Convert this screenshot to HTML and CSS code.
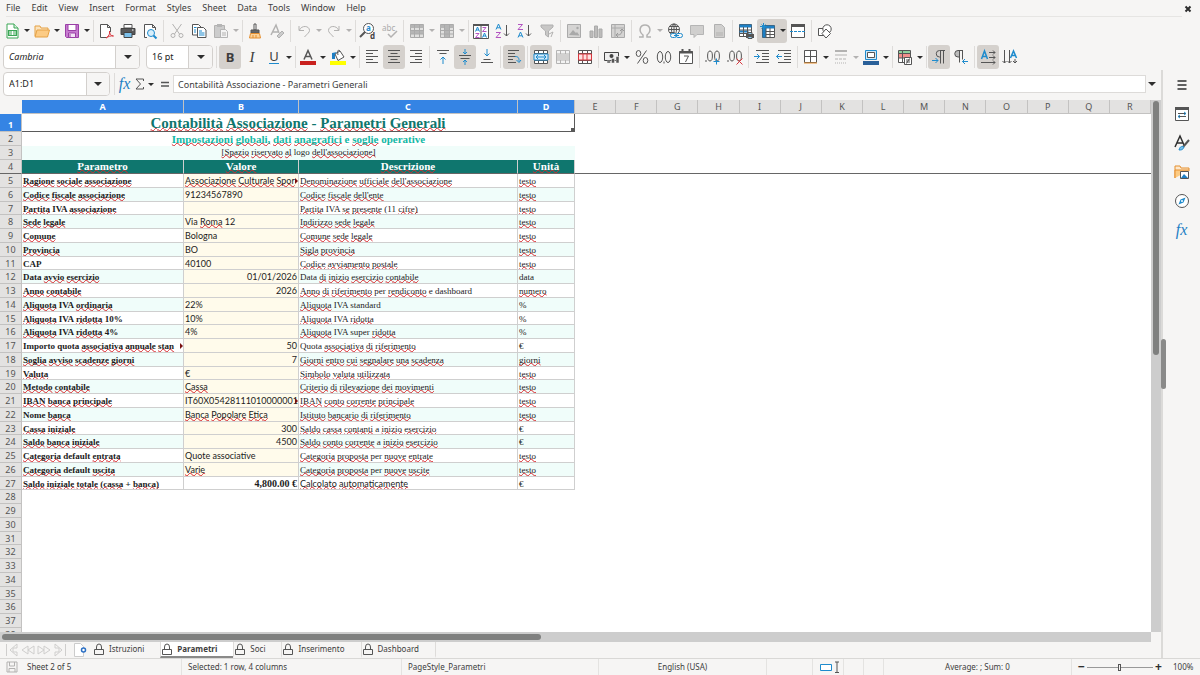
FILE: index.html
```html
<!DOCTYPE html>
<html lang="en">
<head>
<meta charset="utf-8">
<title>Contabilità Associazione</title>
<link rel="stylesheet" href="styles.css">
</head>
<body>
<header class="menubar">
  <nav class="menus" aria-label="Main menu">
    <button>File</button><button>Edit</button><button>View</button><button>Insert</button><button>Format</button><button>Styles</button><button>Sheet</button><button>Data</button><button>Tools</button><button>Window</button><button>Help</button>
  </nav>
  <button class="close" aria-label="Close document"><svg viewBox="0 0 8 8"><path d="M1.5 1.5l5 5m0-5l-5 5" class="k w2"/></svg></button>
</header>

<div class="toolbar standard" role="toolbar" aria-label="Standard">
  <button class="tb" aria-label="New"><svg viewBox="0 0 16 16"><path d="M3 1h7l4 4v10H3z" fill="#fff" stroke="#3aa655"/><path d="M10 1v4h4" fill="#d6f0dc" stroke="#3aa655"/><path d="M4 7h9v6H4z" fill="#3aa655"/><path d="M5 9h7M5 11h7M8.500 8v4" stroke="#fff"/></svg></button><button class="drop" aria-label="New menu"></button>
  <button class="tb" aria-label="Open"><svg viewBox="0 0 16 16"><path d="M1 13V3h5l1 2h7v3" fill="#fbe3bd" stroke="#e5a145"/><path d="M1 14l2-7h12.500l-2 7z" fill="#fccb84" stroke="#e5a145"/></svg></button><button class="drop" aria-label="Recent files"></button>
  <button class="tb" aria-label="Save"><svg viewBox="0 0 16 16"><path d="M1.500 1.500h13v13h-12l-1-1z" fill="#c77bd0" stroke="#9a3fa6"/><path d="M4 1.500h8v6H4z" fill="#fff" stroke="#9a3fa6"/><path d="M4.500 10h7v4.500h-7z" fill="#f3e3f5" stroke="#9a3fa6"/><path d="M6 11v3" stroke="#9a3fa6"/></svg></button><button class="drop" aria-label="Save menu"></button>
  <i class="sep"></i>
  <button class="tb" aria-label="Export as PDF"><svg viewBox="0 0 16 16"><path d="M9 14.500H2.500v-13h7l3 3V9M9.500 1.500v3h3" class="p"/><path d="M8 15c3-2 4-4 3.500-7 0 3 1.500 5 4 5-3-.500-5 .500-7.500 2z" fill="none" stroke="#d9363e"/></svg></button>
  <button class="tb" aria-label="Print"><svg viewBox="0 0 16 16"><path d="M4 1.500h8V5H4z" class="p"/><path d="M1 5.500h14v6H1z" fill="#59595a" stroke="#444"/><path d="M4 9.500h8v5H4z" fill="#7cc0ea" stroke="#444"/><path d="M12 7h1.500" stroke="#fff"/></svg></button>
  <button class="tb" aria-label="Print preview"><svg viewBox="0 0 16 16"><path d="M5 14.500H2.500v-13h8l3 3V7M10.500 1.500v3h3" class="p"/><circle cx="9" cy="10" r="3.500" fill="#d9effb" class="b"/><path d="M11.500 12.500l3 3" class="b w2"/></svg></button>
  <i class="sep"></i>
  <button class="tb" aria-label="Cut"><svg viewBox="0 0 16 16"><path d="M3.500 1l7 10M12.500 1l-7 10" class="d"/><circle cx="4" cy="12.500" r="2" class="d"/><circle cx="12" cy="12.500" r="2" class="d"/></svg></button>
  <button class="tb" aria-label="Copy"><svg viewBox="0 0 16 16"><path d="M1.500 1.500h6l2.500 2.500v8H1.500z" class="p"/><path d="M6.500 4.500h6l2.500 2.500v7.500H6.500z" class="p"/><path d="M3 4.500h2.500M3 7h2M3 9h2M8 8h3M8 10h5.500M8 12h5.500" class="b"/></svg></button>
  <button class="tb" aria-label="Paste"><svg viewBox="0 0 16 16"><path d="M1.500 2.500h10v12h-10z" fill="#ccc" class="dd"/><path d="M4 1h5v3H4z" fill="#b5b5b5"/><path d="M7.500 6.500h5l2 2v6h-7z" fill="#f4f4f4" stroke="#b5b5b5"/><path d="M9 10h4M9 12h4" class="d"/></svg></button><button class="drop off" aria-label="Paste menu"></button>
  <i class="sep"></i>
  <button class="tb" aria-label="Clone formatting"><svg viewBox="0 0 16 16"><path d="M7 1h2v6H7z" class="p"/><path d="M4 7h8v3H4z" fill="#666" stroke="#555"/><path d="M3.500 10.500h9l1 4.500H2.500z" fill="#fbd39b" stroke="#e58f2f"/><path d="M6 12v3M9 12v3" stroke="#e58f2f"/></svg></button>
  <button class="tb" aria-label="Clear formatting"><svg viewBox="0 0 16 16"><path d="M2 12L7 2l3 8M4 9h5" class="d w15"/><path d="M8 13l5-5 2 2-5 5z" fill="#ccc" stroke="#b0b0b0"/></svg></button>
  <i class="sep"></i>
  <button class="tb" aria-label="Undo"><svg viewBox="0 0 16 16"><path d="M3 3v4.500h5M3.500 7c2-5 10-4.500 10 .500 0 2-2 3-5 6.500" class="d"/></svg></button><button class="drop off" aria-label="Undo menu"></button>
  <button class="tb" aria-label="Redo"><svg viewBox="0 0 16 16"><path d="M13 3v4.500H8M12.500 7c-2-5-10-4.500-10 .500 0 2 2 3 5 6.500" class="d"/></svg></button><button class="drop off" aria-label="Redo menu"></button>
  <i class="sep"></i>
  <button class="tb" aria-label="Find and replace"><svg viewBox="0 0 16 16"><circle cx="8.500" cy="5.500" r="5" fill="#fff" class="g"/><path d="M5 9L0 14" class="g w2"/><text x="6" y="8" font-size="8" fill="#1e8bcd" font-weight="bold">a</text><text x="10" y="16" font-size="8" fill="#444" font-weight="bold">d</text></svg></button>
  <button class="tb" aria-label="Spelling"><svg viewBox="0 0 16 16"><text x="0" y="8" font-size="8" fill="#aaa">abc</text><path d="M6 11l3 3 6-6" class="d w15"/></svg></button>
  <i class="sep"></i>
  <button class="tb" aria-label="Row"><svg viewBox="0 0 16 16"><path d="M1.500 1.500h13v13h-13z" fill="#e0e0df" stroke="#aaa"/><path d="M1.500 2h13v3h-13zM1.500 8h13v3h-13z" fill="#b5b5b5"/><path d="M1.500 11h13M5.500 2v12M10.500 2v12M1.500 7.500h13" stroke="#aaa"/></svg></button><button class="drop off" aria-label="Row menu"></button>
  <button class="tb" aria-label="Column"><svg viewBox="0 0 16 16"><path d="M1.500 1.500h13v13h-13z" fill="#e0e0df" stroke="#aaa"/><path d="M1.500 2h13v3h-13zM6 2h5v12H6z" fill="#b5b5b5"/><path d="M1.500 11h13M5.500 2v12M10.500 2v12M1.500 7.500h13" stroke="#aaa"/></svg></button><button class="drop off" aria-label="Column menu"></button>
  <i class="sep"></i>
  <button class="tb" aria-label="Sort"><svg viewBox="0 0 16 16"><path d="M.5 1.500h15v14H.5zM8 2v13" class="p"/><path d="M0 2h16" class="g w2"/><path d="M2.500 8.500l2-4.500 2 4.500M3 7h3M9.500 14.500l2-4.500 2 4.500M10 13h3" class="b"/><path d="M2.500 10.500H6L2.500 14.500H6.500M9.500 4.500H13L9.500 8.500h4" class="v"/></svg></button>
  <button class="tb" aria-label="Sort ascending"><svg viewBox="0 0 16 16"><path d="M1 6.500L3.500 1 6 6.500M2 4.800h3" class="b"/><path d="M1 9.500h4.500L1 14.500h5" class="v"/><path d="M11.500 2v11M9 10.500l2.500 2.500 2.500-2.500" class="g"/></svg></button>
  <button class="tb" aria-label="Sort descending"><svg viewBox="0 0 16 16"><path d="M1 1.500h4.500L1 6.500h5" class="v"/><path d="M1 14.500L3.500 9 6 14.500M2 12.800h3" class="b"/><path d="M11.500 2v11M9 10.500l2.500 2.500 2.500-2.500" class="g"/></svg></button>
  <button class="tb" aria-label="AutoFilter"><svg viewBox="0 0 16 16"><path d="M2 2h12v2L9.500 8v6l-3-2V8L2 4z" fill="#c8c7c6" stroke="#b0b0b0"/><path d="M10 11l4-2-2 5" class="d"/></svg></button>
  <i class="sep"></i>
  <button class="tb" aria-label="Insert image"><svg viewBox="0 0 16 16"><path d="M1.500 1.500h13v13h-13z" fill="#d5d4d3" stroke="#aaa"/><path d="M3 12l4-5 3 3 1-1 2.500 3.500z" fill="#a9a9a9"/><circle cx="11.500" cy="5" r="1.200" fill="#a9a9a9"/></svg></button>
  <button class="tb" aria-label="Insert chart"><svg viewBox="0 0 16 16"><path d="M2 8h3v6.500H2zM6.500 3h3v11.500h-3zM11 6h3v8.500h-3z" fill="#bdbcbb" stroke="#aaa"/></svg></button>
  <button class="tb" aria-label="Insert pivot table"><svg viewBox="0 0 16 16"><path d="M1.500 1.500h13v13h-13z" fill="#d5d4d3" stroke="#aaa"/><path d="M5 2v12M2 5h12" stroke="#aaa"/><path d="M7 12c4 0 5-2 5-5M10 8l2-2 2 2M8 10l-2 2 2 2" fill="none" stroke="#999"/></svg></button>
  <i class="sep"></i>
  <button class="tb" aria-label="Special character"><svg viewBox="0 0 16 16"><path d="M2 14h4v-2C1 8 3 2 8 2s7 6 2 10v2h4" class="d w15"/></svg></button><button class="drop off" aria-label="Character menu"></button>
  <button class="tb" aria-label="Insert hyperlink"><svg viewBox="0 0 16 16"><circle cx="7" cy="6.500" r="5.500" class="g"/><ellipse cx="7" cy="6.500" rx="2.500" ry="5.500" class="g"/><path d="M1.500 6.500h11M2.500 3.500h9M2.500 9.500h5M7 1v10" class="g"/><rect x="3.500" y="10.500" width="6" height="4" rx="2" fill="#f6f5f4" class="b"/><rect x="9" y="10.500" width="6.500" height="4" rx="2" fill="#f6f5f4" class="b"/><path d="M7 12.500h5" class="b"/></svg></button>
  <button class="tb" aria-label="Insert comment"><svg viewBox="0 0 16 16"><path d="M1.500 2.500h13v9H8l-3 3v-3H1.500z" fill="#d0cfce" stroke="#b5b5b5"/></svg></button>
  <button class="tb" aria-label="Headers and footers"><svg viewBox="0 0 16 16"><path d="M3.500 1.500h7l3 3v10h-10z" fill="#d0cfce" stroke="#b0b0b0"/><path d="M5 12h7M5 10h7" class="d"/></svg></button>
  <i class="sep"></i>
  <button class="tb" aria-label="Define print area"><svg viewBox="0 0 16 16"><path d="M1.500 1.500h12v12h-12z" class="p"/><path d="M1.500 1.500h12v3h-12zM1.500 7.500h9v2h-9z" fill="#1e7fc4"/><path d="M1 7h12M1 10.500h12M5.500 4v10M9.500 4v10" class="g"/><path d="M8 11h8v4H8z" fill="#555"/><path d="M10 9.500h4v2h-4zM10 13.500h4v2h-4z" fill="#8fcbf0" stroke="#555"/></svg></button>
  <span class="joined on"><button class="tb" aria-label="Freeze rows and columns" aria-pressed="true"><svg viewBox="0 0 16 16"><path d="M2.500 2.500h12v12h-12z" class="p"/><path d="M2.500 2.500h12v3h-12zM2.500 5h3.500v9.500H2.500z" fill="#1e7fc4"/><path d="M6 5v9.500M10 5v9.500M6 8.500h8M6 11.500h8" class="g"/><path d="M0 3.500h7M3.500 0v7M1.500 1.500l4 4m0-4l-4 4" class="b"/></svg></button><button class="drop" aria-label="Freeze menu"></button></span>
  <button class="tb" aria-label="Split window"><svg viewBox="0 0 16 16"><path d="M1.500 1.500h13v13h-13z" class="p"/><path d="M1 2.500h14" stroke="#555" stroke-width="3"/><path d="M0 8.500h16" class="b" stroke-dasharray="3 1"/></svg></button>
  <i class="sep"></i>
  <button class="tb" aria-label="Show draw functions"><svg viewBox="0 0 16 16"><path d="M1.500 5.500h7v7h-7z" class="p"/><circle cx="10" cy="6" r="4.200" fill="#fff" class="g"/><path d="M9 6l4.500 4.500L9 15l-4-4.500z" fill="#fff" class="g"/></svg></button>
</div>

<div class="toolbar formatting" role="toolbar" aria-label="Formatting">
  <div class="combo font-name"><input aria-label="Font name" value="Cambria"><button aria-label="Font list"></button></div>
  <div class="combo font-size"><input aria-label="Font size" value="16 pt"><button aria-label="Size list"></button></div>
  <i class="sep"></i>
  <button class="tb on" aria-label="Bold" aria-pressed="true"><b class="glyph">B</b></button>
  <button class="tb" aria-label="Italic"><i class="glyph slanted">I</i></button>
  <button class="tb" aria-label="Underline"><span class="glyph lined">U</span></button><button class="drop" aria-label="Underline menu"></button>
  <i class="sep"></i>
  <button class="tb" aria-label="Font color"><svg viewBox="0 0 16 16"><path d="M4 10.500L8 1.500l4 9M5.500 7.500h5" class="g w15"/><path d="M0 12h16v4H0z" fill="#c9211e"/></svg></button><button class="drop" aria-label="Font color menu"></button>
  <button class="tb" aria-label="Highlighting"><svg viewBox="0 0 16 16"><path d="M5 5l5-3 4 6-6 3.500z" fill="#fff" class="g"/><path d="M10 2c-2-2-3 0-2 4" class="g"/><path d="M2 10V4l5-1-2 2v5z" fill="#1e7fc4"/><path d="M0 12h16v4H0z" fill="#ff0"/></svg></button><button class="drop" aria-label="Highlighting menu"></button>
  <i class="sep"></i>
  <button class="tb" aria-label="Align left"><svg viewBox="0 0 16 16"><path d="M2 1.500h12M2 4.500h7M2 7.500h12M2 10.500h7M2 13.500h12" class="g"/></svg></button>
  <button class="tb on" aria-label="Center horizontally" aria-pressed="true"><svg viewBox="0 0 16 16"><path d="M2 1.500h12M4.500 4.500h7M2 7.500h12M4.500 10.500h7M2 13.500h12" class="g"/></svg></button>
  <button class="tb" aria-label="Align right"><svg viewBox="0 0 16 16"><path d="M2 1.500h12M7 4.500h7M2 7.500h12M7 10.500h7M2 13.500h12" class="g"/></svg></button>
  <i class="sep"></i>
  <button class="tb" aria-label="Align top"><svg viewBox="0 0 16 16"><path d="M2 1.500h12M4.500 4.500h7" class="g"/><path d="M8 15V8M5.500 10.500L8 8l2.500 2.500" class="b"/></svg></button>
  <button class="tb on" aria-label="Center vertically" aria-pressed="true"><svg viewBox="0 0 16 16"><path d="M2 6.500h12M3.500 9.500h9" class="g"/><path d="M8 0v4.500M6 3l2 2 2-2M8 16v-4.500M6 13l2-2 2 2" class="b"/></svg></button>
  <button class="tb" aria-label="Align bottom"><svg viewBox="0 0 16 16"><path d="M4.500 10.500h7M2 13.500h12" class="g"/><path d="M8 0v7M5.500 4.500L8 7l2.500-2.500" class="b"/></svg></button>
  <i class="sep"></i>
  <button class="tb on" aria-label="Wrap text" aria-pressed="true"><svg viewBox="0 0 16 16"><path d="M2 1.500h11M2 4.500h7M2 7.500h8M2 10.500h5M2 13.500h8" class="g"/><path d="M9 7.500c4 0 4 2 4 5M10.500 11l2.500 2.500 2-2.500" class="b"/></svg></button>
  <i class="sep"></i>
  <button class="tb on" aria-label="Merge and center" aria-pressed="true"><svg viewBox="0 0 16 16"><path d="M1.500 1.500h13v13h-13z" class="p"/><path d="M1 4.500h14M1 11.500h14M5.500 1v4M10.500 1v4M5.500 11v4M10.500 11v4" class="g"/><path d="M1 5h14v6H1z" fill="#d6ecfa" class="b"/><path d="M3 8h10M5 6L3 8l2 2M11 6l2 2-2 2" class="b"/></svg></button>
  <button class="tb" aria-label="Merge cells"><svg viewBox="0 0 16 16"><path d="M1.500 1.500h13v13h-13z" fill="#f3f3f3" stroke="#b5b5b5"/><path d="M1 5h14M1 11h14M5.500 1v4M10.500 1v4M5.500 11v4M10.500 11v4" class="d"/><path d="M2 5h12v6H2z" fill="#d2d1d0"/></svg></button>
  <button class="tb" aria-label="Unmerge cells"><svg viewBox="0 0 16 16"><path d="M1.500 1.500h13v13h-13z" class="p"/><path d="M1 4.500h14M1 11.500h14M5.500 1v4M10.500 1v4M5.500 11v4M10.500 11v4" class="g"/><path d="M1.500 5h13v6h-13zM6 5v6M10 5v6" fill="#fde0e0" stroke="#d9363e"/></svg></button>
  <i class="sep"></i>
  <button class="tb" aria-label="Format as currency"><svg viewBox="0 0 16 16"><path d="M.5 3.500h14v8H.5z" fill="#eee" stroke="#444"/><circle cx="7.500" cy="7" r="2" fill="#444"/><path d="M3 12h3.500v2H3zM7.500 9.500h3v4.500h-3zM12 7.500h3V14h-3z" fill="#555" stroke="#f6f5f4" stroke-width=".5"/></svg></button><button class="drop" aria-label="Currency menu"></button>
  <button class="tb" aria-label="Format as percent"><svg viewBox="0 0 16 16"><path d="M12.500 1.500l-9 13" class="g"/><ellipse cx="4.500" cy="4.500" rx="2.300" ry="3" class="g"/><ellipse cx="11.500" cy="11.500" rx="2.300" ry="3" class="g"/></svg></button>
  <button class="tb" aria-label="Format as number"><svg viewBox="0 0 16 16"><ellipse cx="4" cy="8" rx="2.700" ry="5.500" class="g"/><ellipse cx="12" cy="8" rx="2.700" ry="5.500" class="g"/><path d="M8 12.500v2" class="g"/></svg></button>
  <button class="tb" aria-label="Format as date"><svg viewBox="0 0 16 16"><path d="M1.500 2.500h13v12h-13z" class="p"/><path d="M1 3.500h14M4.500 0v4M11.500 0v4" class="g w2"/><path d="M6 7h4.500L7.500 13" class="g"/></svg></button>
  <i class="sep"></i>
  <button class="tb" aria-label="Add decimal place"><svg viewBox="0 0 16 16"><ellipse cx="5" cy="7" rx="2.400" ry="5" class="g"/><ellipse cx="12" cy="7" rx="2.400" ry="5" class="g"/><path d="M1 11v2" class="g"/><path d="M8.500 12.500h6M11.500 9.500v6" class="b"/></svg></button>
  <button class="tb" aria-label="Delete decimal place"><svg viewBox="0 0 16 16"><ellipse cx="5" cy="7" rx="2.400" ry="5" class="g"/><ellipse cx="12" cy="7" rx="2.400" ry="5" class="g"/><path d="M1 11v2" class="g"/><path d="M9.500 9.500l6 6m0-6l-6 6" stroke="#d9363e"/></svg></button>
  <i class="sep"></i>
  <button class="tb" aria-label="Increase indent"><svg viewBox="0 0 16 16"><path d="M2 1.500h13M8 4.500h7M8 7.500h7M8 10.500h7M2 13.500h13" class="g"/><path d="M0 7.500h5.500M3 5l2.500 2.500L3 10" class="b"/></svg></button>
  <button class="tb" aria-label="Decrease indent"><svg viewBox="0 0 16 16"><path d="M2 1.500h13M8 4.500h7M8 7.500h7M8 10.500h7M2 13.500h13" class="g"/><path d="M6 7.500H.5M3 5L.5 7.500 3 10" class="b"/></svg></button>
  <i class="sep"></i>
  <button class="tb" aria-label="Borders"><svg viewBox="0 0 16 16"><path d="M1.500 1.500h12v12h-12zM7.500 1.500v12M1.500 7.500h12" class="p"/><path d="M1 14h13" stroke="#e58f2f"/></svg></button><button class="drop" aria-label="Borders menu"></button>
  <button class="tb" aria-label="Border style"><svg viewBox="0 0 16 16"><path d="M2 2h12" class="d w2"/><path d="M2 6h12" class="d"/><path d="M2 10h12" class="d" stroke-dasharray="3 1"/><path d="M2 14h12" class="d" stroke-dasharray="1 1"/></svg></button><button class="drop off" aria-label="Border style menu"></button>
  <button class="tb" aria-label="Border color"><svg viewBox="0 0 16 16"><path d="M2.500 1.500h11v9h-11z" fill="#cfe8f8" class="b"/><path d="M4.500 3.500h7v5h-7z" class="p"/><path d="M0 12h16v4H0z" fill="#2a6099"/></svg></button><button class="drop" aria-label="Border color menu"></button>
  <i class="sep"></i>
  <button class="tb" aria-label="Conditional formatting"><svg viewBox="0 0 16 16"><path d="M1.500 1.500h12v12h-12z" class="p"/><path d="M2 2h11v2.500H2z" fill="#8fd19e"/><path d="M2 5h11v4H2z" fill="#f2908c"/><path d="M1 4.500h13M1 9h13M5.500 1v13" class="g"/><path d="M7.500 8.500h7v7h-7z" class="p"/><path d="M9 11h4M9 13h4M12.500 9.500l-3 5" class="g"/></svg></button><button class="drop" aria-label="Conditional menu"></button>
  <i class="sep"></i>
  <button class="tb on" aria-label="Left-to-right" aria-pressed="true"><svg viewBox="0 0 16 16"><path d="M14 1.500H8.500a3 3 0 0 0 0 6.500h1M9.500 1.500v13M12.500 1.500v13" class="g"/><path d="M1 11.500h6M4.500 9L7 11.500 4.500 14" class="b"/></svg></button>
  <button class="tb" aria-label="Right-to-left"><svg viewBox="0 0 16 16"><path d="M6.500 1.500H5A3 3 0 0 0 5 8h1.500z" fill="#bbb"/><path d="M10 1.500H5a3 3 0 0 0 0 6.500h1M6.500 1.500v12M9.500 1.500v9" class="g"/><path d="M15 12.500H9.500M12 10l-2.500 2.500L12 15" class="b"/></svg></button>
  <i class="sep"></i>
  <button class="tb on" aria-label="Horizontal text direction" aria-pressed="true"><svg viewBox="0 0 16 16"><path d="M1.500 10L4.500 2l3 8M2.500 7.500h4" class="b w15"/><path d="M9 3.500h6M9 8.500h6M1 13.500h14M13 1.500l2 2-2 2M13 6.500l2 2-2 2M13 11.500l2 2-2 2" class="g"/></svg></button>
  <button class="tb" aria-label="Vertical text direction"><svg viewBox="0 0 16 16"><path d="M8.500 9l3-7 3 7M9.500 6.500h4" class="b w15"/><path d="M2.500 1v13M7.500 1v13M13 10v4M.5 12l2 2 2-2M5.500 12l2 2 2-2M11 12l2 2 2-2" class="g"/></svg></button>
</div>

<div class="workspace">
  <main class="document">
    <div class="formula-bar">
      <div class="combo name-box"><input aria-label="Name box" value="A1:D1"><button aria-label="Named ranges"></button></div>
      <i class="sep"></i>
      <button class="fb fx" aria-label="Function wizard">fx</button>
      <button class="fb" aria-label="Select function"><svg viewBox="0 0 12 14"><path d="M9.500 4V2H2l4.500 5L2 12h7.500v-2" class="g"/></svg></button><button class="drop" aria-label="Function menu"></button>
      <button class="fb" aria-label="Formula"><svg viewBox="0 0 12 14"><path d="M2 5.500h8M2 9h8" class="g w15"/></svg></button>
      <input class="formula" aria-label="Input line" value="Contabilità Associazione - Parametri Generali">
      <button class="drop expand" aria-label="Expand formula bar"></button>
    </div>
    <div class="sheet-area">
      <div class="sheet-view"><table class="sheet" id="sheet"></table></div>
      <div class="vscroll"><span></span></div>
    </div>
    <div class="hscroll"><span></span></div>
    <div class="tabs">
      <div class="tab-nav">
        <button aria-label="First sheet"><svg viewBox="0 0 14 14"><path d="M1.500 1v12M12 1L5 7l7 6V9H8V5h4z"/></svg></button>
        <button aria-label="Previous sheet"><svg viewBox="0 0 14 14"><path d="M7 3L1 7l6 4zM13 3L7 7l6 4z"/></svg></button>
        <button aria-label="Next sheet"><svg viewBox="0 0 14 14"><path d="M1 3l6 4-6 4zM7 3l6 4-6 4z"/></svg></button>
        <button aria-label="Last sheet"><svg viewBox="0 0 14 14"><path d="M12.500 1v12M2 1l7 6-7 6V9h4V5H2z"/></svg></button>
      </div>
      <button class="add" aria-label="Add sheet"><svg viewBox="0 0 14 14"><path d="M1.500 .5h6l3 3v10h-9z" fill="#fff" stroke="#ccc"/><circle cx="10.500" cy="7" r="2" fill="#fff" stroke="#2a6fc4" stroke-width="1.500"/></svg></button>
      <button class="tab"><svg viewBox="0 0 12 12"><use href="#lock"/></svg>Istruzioni</button>
      <button class="tab active"><svg viewBox="0 0 12 12"><use href="#lock"/></svg>Parametri</button>
      <button class="tab"><svg viewBox="0 0 12 12"><use href="#lock"/></svg>Soci</button>
      <button class="tab"><svg viewBox="0 0 12 12"><use href="#lock"/></svg>Inserimento</button>
      <button class="tab"><svg viewBox="0 0 12 12"><use href="#lock"/></svg>Dashboard</button>
    </div>
  </main>
  <aside class="sidebar" aria-label="Sidebar">
    <span class="handle"></span>
    <button aria-label="Sidebar settings"><svg viewBox="0 0 16 16"><path d="M3.500 4h9M3.500 8h9M3.500 12h9" class="k w15"/></svg></button>
    <button aria-label="Properties"><svg viewBox="0 0 16 16"><path d="M1.500 1.500h13v13h-13z" class="p"/><path d="M1 2.500h14" stroke="#555" stroke-width="3"/><path d="M4 7.500h8M4 10.500h8" class="g"/><path d="M10 6l2 1.500-2 1.500M6 9l-2 1.500L6 12" class="b"/></svg></button>
    <button aria-label="Styles"><svg viewBox="0 0 16 16"><path d="M1 12L6 1l4 9M3 8h6" class="k w15"/><path d="M15 5l-6 7" class="g w2"/><path d="M5 15c1-4 3-4 5-3-1 3-3 3-5 3z" fill="#7cc0ea" class="b"/></svg></button>
    <button aria-label="Gallery"><svg viewBox="0 0 16 16"><path d="M1 14V2h5l1 2h8v3" fill="#fde8cc" stroke="#e58f2f"/><path d="M1 14V6h14" fill="#fccb84" stroke="#e58f2f"/><path d="M6.500 7.500h8v7h-8z" class="p"/><path d="M7 14l3-4 4 4z" fill="#1e7fc4"/></svg></button>
    <button aria-label="Navigator"><svg viewBox="0 0 16 16"><circle cx="8" cy="8" r="6.500" fill="#fff" class="g"/><path d="M11.500 4.500L9.500 9.500l-5 2 2-5z" fill="#1e8bcd"/><circle cx="8" cy="8" r="1" fill="#fff"/></svg></button>
    <button class="fx" aria-label="Functions">fx</button>
  </aside>
</div>

<footer class="statusbar">
  <span class="st-save"><svg viewBox="0 0 12 12"><path d="M1 1h10v10H1zM3.500 1v4h5V1M3 11V7.500h6V11" class="d"/></svg></span>
  <span class="st-sheet">Sheet 2 of 5</span>
  <span class="st-sel">Selected: 1 row, 4 columns</span>
  <span class="st-style">PageStyle_Parametri</span>
  <span class="st-lang">English (USA)</span>
  <span class="st-gap"></span>
  <span class="st-mode"><svg viewBox="0 0 20 12"><path d="M1.500 3.500h11v6h-11z" fill="#fff" class="b"/><path d="M16 1h4M16 11.500h4M18 1v10.500" class="g"/></svg></span>
  <span class="st-cell"></span>
  <span class="st-cell"></span>
  <span class="st-sum">Average: ; Sum: 0</span>
  <label class="st-zoom"><b>−</b><input type="range" min="0" max="100" value="49" aria-label="Zoom"><b>+</b></label>
  <span class="st-pct">100%</span>
</footer>

<svg class="defs" aria-hidden="true"><symbol id="lock" viewBox="0 0 12 12"><path d="M1.500 6.500h9v5h-9zM3.500 6.500V4a2.500 3 0 0 1 5 0v2.500" fill="none" stroke="#555"/></symbol></svg>
<script src="sheet.js"></script>
</body>
</html>
```
FILE: styles.css
```css
* { box-sizing: border-box; }
html, body { height: 100%; }
body {
  margin: 0;
  display: flex;
  flex-direction: column;
  overflow: hidden;
  background: #f6f5f4;
  color: #3d3d3d;
  font: 9px/12px "Noto Sans", sans-serif;
}
button, input {
  font: inherit;
  color: inherit;
  background: none;
  border: 0;
  margin: 0;
  padding: 0;
  min-width: 0;
}
input { outline: 0; }
svg { display: block; fill: none; overflow: visible; }
.defs { display: none; }

/* icon strokes */
.g { stroke: #555; }
.k { stroke: #2e2e2e; }
.b { stroke: #1e8bcd; }
.v { stroke: #b354c1; }
.d { stroke: #b3b2b1; }
.dd { stroke: #b3b2b1; }
.p { fill: #fff; stroke: #555; }
.w15 { stroke-width: 1.5; }
.w2 { stroke-width: 2; }

/* menu bar */
.menubar { display: flex; justify-content: space-between; height: 17px; padding: 0 6px; }
.menus { display: flex; gap: 11px; flex: 1; border-bottom: 1px solid #e6e5e3; margin-right: 2px; }
.menus button { height: 16px; }
.close { width: 10px; }
.close svg { width: 8px; height: 8px; }

/* toolbars */
.toolbar { display: flex; align-items: center; padding-left: 1px; flex: none; }
.standard { height: 27px; }
.formatting { height: 26px; padding-left: 3px; }
.tb { width: 22px; height: 24px; display: grid; place-items: center; border-radius: 3px; flex: none; }
.tb svg { width: 16px; height: 16px; }
.on { background: #d5d1cd; border-radius: 3px; }
.joined { display: flex; align-items: center; }
.drop { width: 8px; height: 24px; display: grid; place-items: center; flex: none; }
.drop::after, .combo button::after {
  content: "";
  border: 3px solid transparent;
  border-top: 3px solid #2e2e2e;
  border-bottom: 0;
}
.drop.off::after { border-top-color: #b3b2b1; }
.sep { width: 5px; height: 22px; flex: none; display: flex; justify-content: center; }
.sep::after { content: ""; width: 1px; background: #dedcda; }
.drop + .sep { width: 4px; }
.glyph { font-size: 13px; line-height: 16px; }
.slanted { font-family: "Liberation Serif", serif; font-size: 15px; }
.lined { border-bottom: 1px solid #1e8bcd; line-height: 13px; }

.combo { display: flex; height: 24px; background: #fff; border: 1px solid #d3d0cd; border-radius: 4px; flex: none; overflow: hidden; color: #222; }
.combo input { flex: 1; padding-left: 5px; }
.combo button { width: 24px; display: grid; place-items: center; background: #f6f5f4; border-left: 1px solid #d3d0cd; }
.combo button::after { border-width: 4px 4px 0; }
.font-name { width: 137px; margin-right: 6px; }
.font-name input { font-style: italic; }
.font-size { width: 67px; margin-right: 1px; }

/* workspace */
.workspace { display: flex; flex: 1; min-height: 0; }
.document { flex: 1; min-width: 0; display: flex; flex-direction: column; }
.formula-bar { display: flex; align-items: center; height: 30px; padding: 0 4px 2px 3px; flex: none; }
.name-box { width: 107px; margin-right: 2px; }
.name-box button { width: 23px; }
.fb { width: 15px; height: 22px; display: grid; place-items: center; flex: none; }
.fb svg { width: 12px; height: 14px; }
.fx { font: italic 16px/18px "Liberation Serif", serif; color: #1e7fc4; }
.formula-bar .drop + .fb { margin-left: 2px; }
.formula { flex: 1; height: 18px; margin-left: 1px; padding-left: 4px; background: #fff; border: 1px solid #dddbd9; }
.expand { width: 11px; }
.expand::after { border-width: 4px 4px 0; }

.sheet-area { flex: 1; display: flex; min-height: 0; }
.sheet-view { flex: 1; min-width: 0; background: #fff; overflow: hidden; }
.vscroll { width: 10px; background: #cdcdcd; padding: 1px 2px; flex: none; }
.vscroll span { display: block; height: 48%; border-radius: 3px; background: #7f807f; }
.hscroll { height: 10px; margin-right: 10px; background: #cdcdcd; padding: 2px; flex: none; }
.hscroll span { display: block; width: 47%; height: 6px; border-radius: 3px; background: #7f807f; }

/* spreadsheet grid */
.sheet { width: 100%; table-layout: fixed; border-collapse: separate; border-spacing: 0; }
.sheet th, .sheet td { padding: 0; overflow: hidden; white-space: nowrap; line-height: 11px; vertical-align: top; }
.sheet tr { height: 14px; }
.sheet tbody tr:nth-child(4n+3) { height: 13px; }
.sheet tbody tr:nth-child(3) { height: 14px; }
.sheet tbody tr.r1 { height: 18px; }
.r1 .head { padding-top: 3px; }
.w-row { width: 22px; } .w-a { width: 162px; } .w-b { width: 115px; } .w-c { width: 219px; } .w-d { width: 57px; }
.sheet .head { background: #e3e2e1; color: #555; font-weight: normal; text-align: center; vertical-align: middle; border-right: 1px solid #c3c2c1; border-bottom: 1px solid #c3c2c1; }
.sheet .head.sel { background: #3584e4; color: #fff; font-weight: bold; }
.sheet .corner { background: #f6f5f4; border: 0; }
.cell { position: relative; border-right: 1px solid #cfcfcf; border-bottom: 1px solid #cfcfcf; color: #1c1c1c; }
.cell div { padding: 0 1px; height: 12px; line-height: 15px; }
.sheet .wide { text-align: center; border: 0; font-family: "Liberation Serif", serif; }
.sheet .title { font-size: 15px; font-weight: bold; color: #0f766e; border-bottom: 1px solid #5a5a5a; border-right: 1px solid #5a5a5a; }
.title div { height: 16px; line-height: 18px; }
.title::after { content: ""; position: absolute; right: 0; bottom: 0; width: 3px; height: 3px; background: #5a5a5a; }
.sheet .subtitle { font-size: 11px; font-weight: bold; color: #14b8a6; }
.sheet .logo { font-size: 9px; background: #f0fdfa; }
.logo div { line-height: 13px; }
.sheet .band { background: #0f766e; color: #fff; font: bold 11px/12px "Liberation Serif", serif; text-align: center; }
.band div { line-height: 13px; }
.sheet .freeze td, .sheet .freeze th { border-bottom: 1px solid #666; }
.col-a { font-family: "Liberation Serif", serif; font-weight: bold; }
.col-b { font-family: Lato, sans-serif; background: #fffbeb; }
.col-b div { line-height: 13px; }
.col-c, .col-d { font-family: "Liberation Serif", serif; }
.even .col-a, .even .col-c, .even .col-d { background: #f0fdfa; }
.num { text-align: right; }
.total .col-b { background: #fff; font-family: "Liberation Serif", serif; font-weight: bold; font-size: 10px; }
.total .col-c { font-family: Lato, sans-serif; }
.total .col-c div { line-height: 13px; }
.more::after { content: ""; position: absolute; right: 0; top: 4px; border: 3px solid transparent; border-left-color: #7a1010; border-right: 0; }
.typo {
  text-decoration: underline wavy #d8272c 1px;
  text-decoration-skip-ink: none;
  text-underline-offset: -1px;
}

/* sheet tabs */
.tabs { display: flex; align-items: stretch; height: 16px; padding-left: 5px; flex: none; font-size: 8px; }
.tab-nav { display: flex; align-items: center; gap: 2px; }
.tab-nav svg { width: 14px; height: 14px; stroke: #cfcecd; }
.add { margin-left: 6px; width: 20px; }
.add svg { width: 14px; height: 14px; }
.tab { display: flex; align-items: center; gap: 4px; padding: 0 16px 0 0; border-bottom: 2px solid transparent; }
.tab svg { width: 12px; height: 12px; }
.tab.active { background: #fff; font-weight: bold; border-bottom-color: #8a8a89; }
.tab + .tab { border-left: 1px solid #dedcda; }
.tab:last-child { border-right: 1px solid #dedcda; }

/* sidebar */
.sidebar { position: relative; width: 39px; border-left: 2px solid #dbdad8; display: flex; flex-direction: column; align-items: center; gap: 9px; padding-top: 5px; flex: none; }
.sidebar button { width: 20px; height: 20px; display: grid; place-items: center; }
.sidebar svg { width: 16px; height: 16px; }
.handle { position: absolute; left: -2px; top: 50%; width: 5px; height: 50px; margin-top: -25px; border-radius: 3px; background: #8a8a89; }

/* status bar */
.statusbar { display: flex; height: 17px; flex: none; border-top: 1px solid #d9d8d6; font-size: 8px; line-height: 16px; white-space: nowrap; }
.statusbar > * { padding-left: 6px; }
.st-save { width: 21px; }
.st-save svg { width: 12px; height: 12px; margin-top: 2px; }
.st-sheet { width: 160px; }
.st-sel, .st-style, .st-lang, .st-gap, .st-mode, .st-cell, .st-sum, .st-zoom { border-left: 1px solid #e4e3e1; }
.st-sel { width: 220px; }
.st-style { width: 197px; }
.statusbar .st-lang { flex: 1; padding: 0; text-align: center; }
.st-gap { width: 46px; }
.st-mode { width: 31px; }
.st-mode svg { width: 20px; height: 12px; margin-top: 2px; }
.st-cell { width: 20px; }
.statusbar .st-sum { width: 188px; padding: 0; text-align: center; }
.st-zoom { width: 96px; display: flex; align-items: center; gap: 2px; }
.st-zoom b { font-size: 12px; color: #2e2e2e; }
.st-zoom input { width: 66px; height: 12px; appearance: none; background: linear-gradient(#999, #999) center / 100% 1px no-repeat; }
.st-zoom input::-webkit-slider-thumb { appearance: none; width: 3px; height: 7px; background: #f6f5f4; border: 1px solid #555; }
.st-pct { width: 33px; }
```
FILE: sheet.js
```js
const COLUMNS = "ABCDEFGHIJKLMNOPQR".split("");
const LAST_ROW = 38;

const KNOWN = new Set(["e", "logo", "operative", "IVA", "Importo", "quota", "Quota", "Nome",
  "default", "CAP", "Data", "data", "a", "per", "super", "standard", "dashboard", "Via",
  "Bologna", "Quote", "associative", "BO"]);

const ROWS = [
  ["Ragione sociale associazione", "Associazione Culturale Spor", "Denominazione ufficiale dell'associazione", "testo"],
  ["Codice fiscale associazione", "91234567890", "Codice fiscale dell'ente", "testo"],
  ["Partita IVA associazione", "", "Partita IVA se presente (11 cifre)", "testo"],
  ["Sede legale", "Via Roma 12", "Indirizzo sede legale", "testo"],
  ["Comune", "Bologna", "Comune sede legale", "testo"],
  ["Provincia", "BO", "Sigla provincia", "testo"],
  ["CAP", "40100", "Codice avviamento postale", "testo"],
  ["Data avvio esercizio", ">01/01/2026", "Data di inizio esercizio contabile", "data"],
  ["Anno contabile", ">2026", "Anno di riferimento per rendiconto e dashboard", "numero"],
  ["Aliquota IVA ordinaria", "22%", "Aliquota IVA standard", "%"],
  ["Aliquota IVA ridotta 10%", "10%", "Aliquota IVA ridotta", "%"],
  ["Aliquota IVA ridotta 4%", "4%", "Aliquota IVA super ridotta", "%"],
  ["Importo quota associativa annuale stan", ">50", "Quota associativa di riferimento", "€"],
  ["Soglia avviso scadenze giorni", ">7", "Giorni entro cui segnalare una scadenza", "giorni"],
  ["Valuta", "€", "Simbolo valuta utilizzata", "testo"],
  ["Metodo contabile", "Cassa", "Criterio di rilevazione dei movimenti", "testo"],
  ["IBAN banca principale", "IT60X05428111010000001", "IBAN conto corrente principale", "testo"],
  ["Nome banca", "Banca Popolare Etica", "Istituto bancario di riferimento", "testo"],
  ["Cassa iniziale", ">300", "Saldo cassa contanti a inizio esercizio", "€"],
  ["Saldo banca iniziale", ">4500", "Saldo conto corrente a inizio esercizio", "€"],
  ["Categoria default entrata", "Quote associative", "Categoria proposta per nuove entrate", "testo"],
  ["Categoria default uscita", "Varie", "Categoria proposta per nuove uscite", "testo"],
  ["Saldo iniziale totale (cassa + banca)", ">4,800.00 €", "Calcolato automaticamente", "€"],
];

// Cells whose text runs past the column edge, as "row:column".
const CLIPPED = new Set(["5:b", "17:a", "21:b"]);

function spell(text) {
  return text.split(" ").map(word =>
    KNOWN.has(word) || !/[A-Za-zà]{2}/.test(word) || /^IT\d/.test(word)
      ? word : `<span class="typo">${word}</span>`).join(" ");
}

function cell(text, classes, span = 1) {
  return `<td class="cell ${classes}" colspan="${span}"><div>${spell(text)}</div></td>`;
}

function bodyRow(number) {
  const head = `<th class="head${number === 1 ? " sel" : ""}" scope="row">${number}</th>`;
  const rest = `<td colspan="14"></td>`;
  if (number === 1) return `<tr class="r1">${head}${cell("Contabilità Associazione - Parametri Generali", "wide title", 4)}${rest}</tr>`;
  if (number === 2) return `<tr>${head}${cell("Impostazioni globali, dati anagrafici e soglie operative", "wide subtitle", 4)}${rest}</tr>`;
  if (number === 3) return `<tr>${head}${cell("[Spazio riservato al logo dell'associazione]", "wide logo", 4)}${rest}</tr>`;
  if (number === 4) return `<tr class="freeze">${head}${["Parametro", "Valore", "Descrizione", "Unità"].map(t => cell(t, "band")).join("")}${rest}</tr>`;
  const data = ROWS[number - 5];
  if (!data) return `<tr>${head}<td colspan="18"></td></tr>`;
  const cells = data.map((text, i) => {
    const col = "abcd"[i];
    const right = text.startsWith(">");
    return cell(right ? text.slice(1) : text,
      `col-${col}${right ? " num" : ""}${CLIPPED.has(`${number}:${col}`) ? " more" : ""}`);
  }).join("");
  const kind = number === 27 ? "total" : number % 2 ? "odd" : "even";
  return `<tr class="${kind}">${head}${cells}${rest}</tr>`;
}

const widths = ["row", "a", "b", "c", "d"].map(n => `<col class="w-${n}">`).join("") + `<col span="14">`;
const letters = COLUMNS.map((c, i) => `<th class="head${i < 4 ? " sel" : ""}" scope="col">${c}</th>`).join("");
let body = "";
for (let n = 1; n <= LAST_ROW; n++) body += bodyRow(n);

document.getElementById("sheet").innerHTML =
  `<colgroup>${widths}</colgroup><thead><tr><th class="head corner"></th>${letters}</tr></thead><tbody>${body}</tbody>`;
```
